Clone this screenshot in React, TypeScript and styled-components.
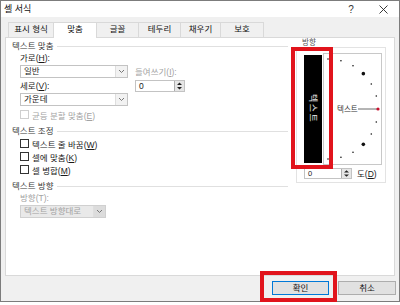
import React from "react"
import styled, { createGlobalStyle } from "styled-components"

const GlobalStyle = createGlobalStyle`
  * { box-sizing: border-box; }
  html, body { margin: 0; padding: 0; background: #fff; }
  body {
    font-family: "Liberation Sans", "Noto Sans CJK KR", sans-serif;
    font-size: 8.5px;
    color: #1a1a1a;
  }
`

const tabs = [
  { label: "표시 형식", width: 46 },
  { label: "맞춤", width: 44, active: true },
  { label: "글꼴", width: 43 },
  { label: "테두리", width: 43 },
  { label: "채우기", width: 41 },
  { label: "보호", width: 44 },
]

const Chevron: React.FC = () => (
  <svg width="7" height="5" viewBox="0 0 7 5">
    <path d="M1 1 L3.5 3.5 L6 1" fill="none" stroke="#777" strokeWidth="1" />
  </svg>
)

const Dial: React.FC = () => {
  const cx = 4
  const cy = 55
  const r = 50
  const dots = []
  for (let a = -90; a <= 90; a += 15) {
    if (a === 0) continue
    const rad = (a * Math.PI) / 180
    const big = Math.abs(a) === 45
    dots.push(
      <circle
        key={a}
        cx={cx + r * Math.cos(rad)}
        cy={cy - r * Math.sin(rad)}
        r={big ? 1.8 : 0.8}
        fill="#111"
      />
    )
  }
  return (
    <svg width="57" height="110" viewBox="0 0 57 110">
      {dots}
      <text x="13" y="58" fontSize="7.5" fill="#333" fontFamily="Noto Sans CJK KR, sans-serif">
        텍스트
      </text>
      <line x1="34" y1="55" x2="53" y2="55" stroke="#444" strokeWidth="0.8" />
      <circle cx={cx + r} cy={cy} r="1.6" fill="#c8102e" />
    </svg>
  )
}

const App: React.FC = () => {
  return (
    <>
      <GlobalStyle />
      <Window>
        <TitleBar>
          <Title>셀 서식</Title>
          <TitleButton>?</TitleButton>
          <TitleButton>
            <svg width="9" height="9" viewBox="0 0 9 9">
              <path d="M0.5 0.5 L8.5 8.5 M8.5 0.5 L0.5 8.5" stroke="#222" strokeWidth="0.9" />
            </svg>
          </TitleButton>
        </TitleBar>
        <Content>
          <TabStrip>
            {tabs.map((t) => (
              <Tab key={t.label} $width={t.width} $active={!!t.active}>
                {t.label}
              </Tab>
            ))}
          </TabStrip>
          <Panel>
            <LeftCol>
              <GroupHeader>
                <span>텍스트 맞춤</span>
              </GroupHeader>
              <Indent>
                <AlignGrid>
                  <FieldLabel>
                    가로(<u>H</u>):
                  </FieldLabel>
                  <span />
                  <Combo $width={108}>
                    <ComboText>일반</ComboText>
                    <ComboArrow>
                      <Chevron />
                    </ComboArrow>
                  </Combo>
                  <FieldLabel $disabled>
                    들여쓰기(<u>I</u>):
                  </FieldLabel>
                  <FieldLabel>
                    세로(<u>V</u>):
                  </FieldLabel>
                  <Spinner>
                    <ComboText>0</ComboText>
                    <SpinButtons>
                      <svg width="7" height="10" viewBox="0 0 7 10">
                        <path d="M1 4 L3.5 1.5 L6 4 Z M1 6 L3.5 8.5 L6 6 Z" fill="#222" />
                      </svg>
                    </SpinButtons>
                  </Spinner>
                  <Combo $width={108}>
                    <ComboText>가운데</ComboText>
                    <ComboArrow>
                      <Chevron />
                    </ComboArrow>
                  </Combo>
                </AlignGrid>
                <CheckRow $disabled $top={2}>
                  <CheckBox $disabled />
                  <span>
                    균등 분할 맞춤(<u>E</u>)
                  </span>
                </CheckRow>
              </Indent>
              <GroupHeader $top={4}>
                <span>텍스트 조정</span>
              </GroupHeader>
              <Indent>
                <CheckRow>
                  <CheckBox />
                  <span>
                    텍스트 줄 바꿈(<u>W</u>)
                  </span>
                </CheckRow>
                <CheckRow>
                  <CheckBox />
                  <span>
                    셀에 맞춤(<u>K</u>)
                  </span>
                </CheckRow>
                <CheckRow>
                  <CheckBox />
                  <span>
                    셀 병합(<u>M</u>)
                  </span>
                </CheckRow>
              </Indent>
              <GroupHeader $top={4}>
                <span>텍스트 방향</span>
              </GroupHeader>
              <Indent>
                <FieldLabel $disabled>방향(T):</FieldLabel>
                <Combo $width={86} $disabled $top={1}>
                  <ComboText>텍스트 방향대로</ComboText>
                  <ComboArrow $disabled>
                    <Chevron />
                  </ComboArrow>
                </Combo>
              </Indent>
            </LeftCol>
            <RightCol>
              <SmallLabel>방향</SmallLabel>
              <OrientBox>
                <OrientRow>
                  <VerticalText>
                    텍스트
                    <Highlight $t={-8} $l={-13} $r={-11} $b={-6} />
                  </VerticalText>
                  <DialBox>
                    <Dial />
                  </DialBox>
                </OrientRow>
                <DegreeRow>
                  <Spinner $width={48} $height={11} $small>
                    <ComboText>0</ComboText>
                    <SpinButtons>
                      <svg width="7" height="9" viewBox="0 0 7 9">
                        <path d="M1 3.6 L3.5 1.2 L6 3.6 Z M1 5.4 L3.5 7.8 L6 5.4 Z" fill="#222" />
                      </svg>
                    </SpinButtons>
                  </Spinner>
                  <span>
                    도(<u>D</u>)
                  </span>
                </DegreeRow>
              </OrientBox>
            </RightCol>
          </Panel>
        </Content>
        <Footer>
          <ButtonWrap>
            <DialogButton $width={57} $primary>
              확인
            </DialogButton>
            <Highlight $t={-10} $l={-12} $r={-8} $b={-7} />
          </ButtonWrap>
          <DialogButton $width={58}>취소</DialogButton>
        </Footer>
      </Window>
    </>
  )
}

const Window = styled.div`
  width: 400px;
  height: 302px;
  border: 1px solid #7c7c7c;
  background: #f0f0f0;
  display: flex;
  flex-direction: column;
`

const TitleBar = styled.div`
  height: 16px;
  background: #fff;
  display: flex;
  align-items: center;
  padding-left: 3px;
  font-size: 9px;
  color: #111;
`

const Title = styled.div`
  flex: 1;
  line-height: 16px;
`

const TitleButton = styled.div`
  width: 32px;
  height: 16px;
  display: flex;
  align-items: center;
  justify-content: center;
  font-size: 10px;
  color: #333;
`

const Content = styled.div`
  padding: 5px 4px 0;
  display: flex;
  flex-direction: column;
`

const TabStrip = styled.div`
  height: 16px;
  display: flex;
  align-items: flex-start;
  padding-left: 3px;
  position: relative;
  z-index: 1;
`

const Tab = styled.div<{ $width: number; $active: boolean }>`
  width: ${(p) => p.$width}px;
  height: ${(p) => (p.$active ? 16 : 15)}px;
  margin-right: -1px;
  border: 1px solid #d9d9d9;
  border-bottom: none;
  background: ${(p) => (p.$active ? "#fff" : "#f0f0f0")};
  text-align: center;
  line-height: 13px;
  font-size: 8.5px;
  color: #111;
`

const Panel = styled.div`
  height: 239px;
  margin-top: -1px;
  background: #fff;
  border: 1px solid #d9d9d9;
  display: flex;
`

const LeftCol = styled.div`
  width: 282px;
  padding: 2px 0 0 6px;
  display: flex;
  flex-direction: column;
`

const GroupHeader = styled.div<{ $top?: number }>`
  height: 12px;
  line-height: 12px;
  margin-top: ${(p) => p.$top ?? 0}px;
  display: flex;
  align-items: center;
  gap: 4px;
  color: #3a3a3a;
  white-space: nowrap;

  &::after {
    content: "";
    flex: 1;
    height: 1px;
    background: #e0e0e0;
  }
`

const Indent = styled.div`
  padding-left: 8px;
  display: flex;
  flex-direction: column;
`

const AlignGrid = styled.div`
  display: grid;
  grid-template-columns: 108px 50px;
  grid-template-rows: 12px 13px 13px 13px;
  column-gap: 7px;
  row-gap: 1px;
  align-items: center;
`

const FieldLabel = styled.div<{ $disabled?: boolean }>`
  height: 12px;
  line-height: 12px;
  white-space: nowrap;
  color: ${(p) => (p.$disabled ? "#a3a3a3" : "#1a1a1a")};
`

const Combo = styled.div<{ $width: number; $disabled?: boolean; $top?: number }>`
  width: ${(p) => p.$width}px;
  height: 13px;
  line-height: 11px;
  margin-top: ${(p) => p.$top ?? 0}px;
  border: 1px solid ${(p) => (p.$disabled ? "#d0d0d0" : "#c3c3c3")};
  background: ${(p) => (p.$disabled ? "#e9e9e9" : "#fff")};
  color: ${(p) => (p.$disabled ? "#a3a3a3" : "#1a1a1a")};
  display: flex;
  align-items: stretch;
`

const ComboText = styled.div`
  flex: 1;
  padding-left: 3px;
  white-space: nowrap;
  overflow: hidden;
`

const ComboArrow = styled.div<{ $disabled?: boolean }>`
  width: 12px;
  border-left: 1px solid #dedede;
  background: ${(p) => (p.$disabled ? "#dcdcdc" : "#f2f2f2")};
  display: flex;
  align-items: center;
  justify-content: center;
`

const Spinner = styled.div<{ $width?: number; $height?: number; $small?: boolean }>`
  width: ${(p) => p.$width ?? 50}px;
  height: ${(p) => p.$height ?? 12}px;
  line-height: ${(p) => (p.$height ?? 12) - 2}px;
  border: 1px solid #c3c3c3;
  background: #fff;
  display: flex;
  align-items: stretch;
  font-size: ${(p) => (p.$small ? 7.5 : 8.5)}px;
`

const SpinButtons = styled.div`
  width: 10px;
  border-left: 1px solid #adadad;
  background: #e6e6e6;
  display: flex;
  align-items: center;
  justify-content: center;
`

const CheckRow = styled.div<{ $disabled?: boolean; $top?: number }>`
  height: 13px;
  margin-top: ${(p) => p.$top ?? 0}px;
  display: flex;
  align-items: center;
  gap: 3px;
  white-space: nowrap;
  color: ${(p) => (p.$disabled ? "#a3a3a3" : "#1a1a1a")};
`

const CheckBox = styled.span<{ $disabled?: boolean }>`
  width: 9px;
  height: 9px;
  border: 1px solid ${(p) => (p.$disabled ? "#cfcfcf" : "#333")};
  background: #fff;
`

const RightCol = styled.div`
  flex: 1;
  padding-left: 8px;
  display: flex;
  flex-direction: column;
`

const SmallLabel = styled.div`
  height: 9px;
  line-height: 9px;
  margin-left: 6px;
  font-size: 7.5px;
  color: #555;
`

const OrientBox = styled.div`
  width: 90px;
  height: 136px;
  border: 1px solid #e3e3e3;
  padding: 5px 0 0 7px;
  display: flex;
  flex-direction: column;
`

const OrientRow = styled.div`
  display: flex;
  align-items: center;
`

const VerticalText = styled.div`
  position: relative;
  width: 18px;
  height: 108px;
  background: #000;
  color: #e8e8e8;
  writing-mode: vertical-rl;
  text-orientation: sideways;
  display: flex;
  align-items: center;
  justify-content: center;
  font-size: 9px;
  letter-spacing: 1.5px;
  margin-right: 1px;
`

const DialBox = styled.div`
  width: 59px;
  height: 112px;
  border: 1px solid #c8c8c8;
  background: #fff;
`

const DegreeRow = styled.div`
  margin-top: 2px;
  display: flex;
  align-items: center;
  gap: 5px;
  color: #1a1a1a;
`

const Highlight = styled.div<{ $t: number; $l: number; $r: number; $b: number }>`
  position: absolute;
  top: ${(p) => p.$t}px;
  left: ${(p) => p.$l}px;
  right: ${(p) => p.$r}px;
  bottom: ${(p) => p.$b}px;
  border: 4px solid #e1141c;
  pointer-events: none;
  z-index: 5;
`

const Footer = styled.div`
  display: flex;
  justify-content: flex-end;
  gap: 9px;
  padding: 5px 3px 0 0;
`

const ButtonWrap = styled.div`
  position: relative;
  display: flex;
`

const DialogButton = styled.div<{ $width: number; $primary?: boolean }>`
  width: ${(p) => p.$width}px;
  height: 14px;
  border: 1px solid ${(p) => (p.$primary ? "#0078d7" : "#adadad")};
  background: #e1e1e1;
  text-align: center;
  line-height: 12px;
  font-size: 8.5px;
  color: #111;
`

export default App
